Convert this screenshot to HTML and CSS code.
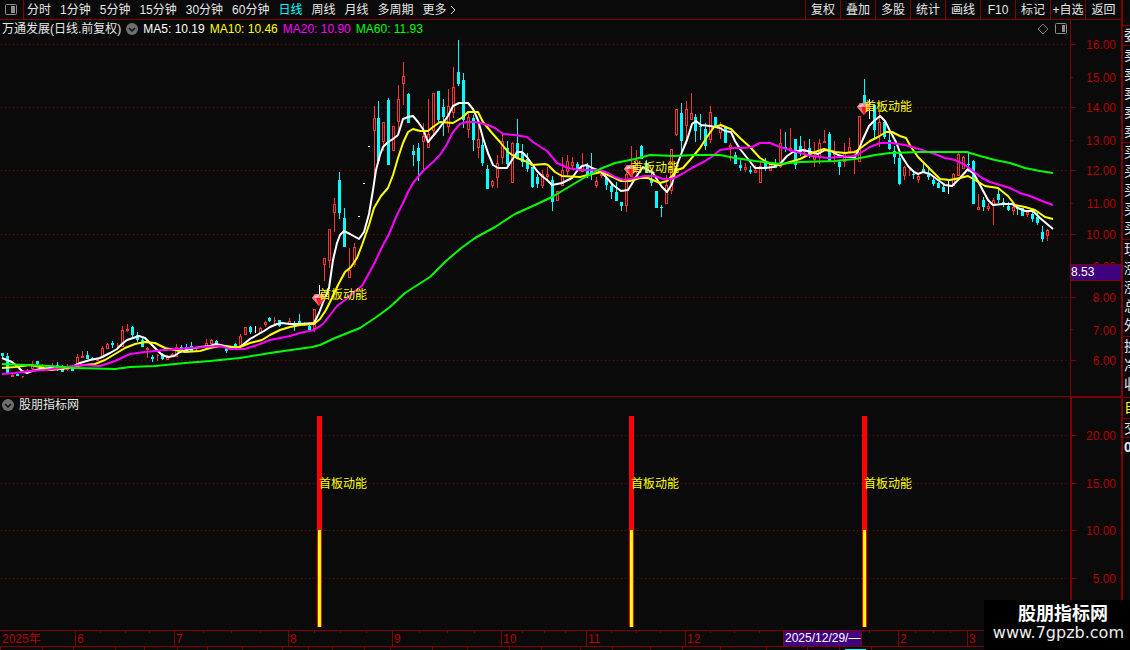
FILE: index.html
```html
<!DOCTYPE html>
<html lang="zh-CN">
<head>
    <meta charset="UTF-8">
    <meta name="viewport" content="width=device-width, initial-scale=1.0">
    <title>万通发展 日线</title>
    <link rel="stylesheet" href="styles.css">
</head>
<body>
    <div class="terminal">
        <div class="workspace">
            <!-- Toolbar -->
            <header class="toolbar">
                <button class="layout-btn" aria-label="布局">
                    <svg width="12" height="12" viewBox="0 0 12 12"><rect x="0.5" y="0.5" width="11" height="10" rx="1" fill="none" stroke="#8c8c8c"/><rect x="6" y="2" width="4" height="7" fill="#8c8c8c"/></svg>
                </button>
                <nav class="periods">
                    <button>分时</button>
                    <button>1分钟</button>
                    <button>5分钟</button>
                    <button>15分钟</button>
                    <button>30分钟</button>
                    <button>60分钟</button>
                    <button class="active">日线</button>
                    <button>周线</button>
                    <button>月线</button>
                    <button>多周期</button>
                    <button class="more">更多
                        <svg width="6" height="10" viewBox="0 0 6 10"><path d="M1 1l4 4-4 4" fill="none" stroke="#dcdcdc"/></svg>
                    </button>
                </nav>
                <div class="tools">
                    <button>复权</button>
                    <button>叠加</button>
                    <button>多股</button>
                    <button>统计</button>
                    <button>画线</button>
                    <button>F10</button>
                    <button>标记</button>
                    <button>+自选</button>
                    <button>返回</button>
                </div>
            </header>

            <!-- Price chart -->
            <section class="panel">
                <div class="panel-head">
                    <span>万通发展(日线.前复权)</span>
                    <button class="fold" aria-label="收起">
                        <svg width="12" height="12" viewBox="0 0 12 12"><circle cx="6" cy="6" r="6" fill="#6e6e6e"/><path d="M3 5l3 3 3-3" fill="none" stroke="#111" stroke-width="1.5"/></svg>
                    </button>
                    <span class="ma5">MA5: 10.19</span>
                    <span class="ma10">MA10: 10.46</span>
                    <span class="ma20">MA20: 10.90</span>
                    <span class="ma60">MA60: 11.93</span>
                    <span class="head-icons">
                        <svg width="12" height="12" viewBox="0 0 12 12"><path d="M6 1l5 5-5 5-5-5z" fill="none" stroke="#777"/></svg>
                        <svg width="12" height="12" viewBox="0 0 12 12"><rect x="0.5" y="0.5" width="11" height="10" rx="1" fill="none" stroke="#8c8c8c"/><rect x="7" y="2" width="3" height="7" fill="#8c8c8c"/></svg>
                    </span>
                </div>
                <svg id="price" class="chart" viewBox="0 20 1121 376"></svg>
            </section>

            <!-- Indicator -->
            <section class="panel">
                <div class="panel-head">
                    <button class="fold" aria-label="收起">
                        <svg width="12" height="12" viewBox="0 0 12 12"><circle cx="6" cy="6" r="6" fill="#6e6e6e"/><path d="M3 5l3 3 3-3" fill="none" stroke="#111" stroke-width="1.5"/></svg>
                    </button>
                    <span>股朋指标网</span>
                </div>
                <svg id="signal" class="chart" viewBox="0 396 1121 234"></svg>
            </section>

            <!-- Dates -->
            <svg id="dates" class="chart" viewBox="0 630 1121 20"></svg>
        </div>

        <!-- Quote sidebar, cut by the window edge -->
        <aside class="quotes">
            <p class="group top">委</p>
            <p class="group five">卖<br>卖<br>卖<br>卖<br>卖</p>
            <p class="group five">买<br>买<br>买<br>买<br>买</p>
            <p class="group five">现<br>涨<br>涨<br>总<br>外</p>
            <p class="group three">换<br>净<br>收</p>
            <p class="group self">自</p>
            <p class="group deal">交</p>
            <p class="group count">0</p>
        </aside>
    </div>

    <div class="watermark">
        <strong>股朋指标网</strong>
        <span>www.7gpzb.com</span>
    </div>

    <script src="chart.js"></script>
</body>
</html>
```
FILE: styles.css
```css
* {
    margin: 0;
    padding: 0;
    box-sizing: border-box;
}

body {
    background: #0a0a0a;
    color: #e6e6e6;
    font-family: "Liberation Sans", "Noto Sans CJK SC", sans-serif;
    font-size: 12px;
    line-height: 18px;
    overflow: hidden;
}

button {
    background: none;
    border: none;
    color: inherit;
    font: inherit;
    white-space: nowrap;
    cursor: pointer;
}

svg {
    display: block;
}

.terminal {
    display: flex;
    position: relative;
}

.workspace {
    flex: 1;
    min-width: 0;
}

/* Toolbar */
.toolbar {
    display: flex;
    height: 20px;
    border-bottom: 1px solid #800000;
}

.layout-btn {
    width: 24px;
    padding-left: 5px;
    border-right: 1px solid #800000;
}

.periods {
    display: flex;
    gap: 9px;
    padding-left: 3px;
}

.periods .active {
    color: #00ffff;
}

.more {
    display: flex;
    align-items: center;
    gap: 3px;
}

.tools {
    display: flex;
    margin-left: auto;
}

.tools button {
    width: 35px;
    border-left: 1px solid #800000;
}

.tools button:last-child {
    width: 36px;
}

/* Chart panels */
.panel {
    position: relative;
}

.panel-head {
    position: absolute;
    top: 0;
    left: 0;
    right: 51px;
    display: flex;
    align-items: center;
    gap: 5px;
    padding-left: 2px;
    white-space: nowrap;
}

.fold {
    width: 12px;
    height: 12px;
}

.ma5 { color: #fff; }
.ma10 { color: #ff0; }
.ma20 { color: #f0f; }
.ma60 { color: #0f0; }

.head-icons {
    display: flex;
    gap: 6px;
    margin-left: auto;
    padding-right: 3px;
}

.chart {
    width: 100%;
    height: auto;
}

.frame {
    fill: none;
    stroke: #800000;
    shape-rendering: crispEdges;
}

.thick {
    stroke-width: 2;
}

.grid-line {
    stroke: #780000;
    stroke-dasharray: 1 3;
    shape-rendering: crispEdges;
}

.axis-text {
    fill: #b40000;
    font-size: 12px;
}

.end {
    text-anchor: end;
}

.cursor-box {
    fill: #400080;
    stroke: #800000;
    shape-rendering: crispEdges;
}

.cursor-text {
    fill: #fff;
    font-size: 12px;
}

.up {
    fill: #0a0a0a;
    stroke: #ff3232;
    shape-rendering: crispEdges;
}

.down {
    fill: #00ffff;
    shape-rendering: crispEdges;
}

.flat {
    fill: #fff;
    shape-rendering: crispEdges;
}

.line {
    fill: none;
    stroke-width: 2;
    stroke-linejoin: round;
}

.line.ma5 { stroke: #fff; }
.line.ma10 { stroke: #ff0; }
.line.ma20 { stroke: #f0f; }
.line.ma60 { stroke: #0f0; }

.bar-red { fill: #f00; }
.bar-yellow { fill: #ff0; }

.signal-text {
    fill: #ff0;
    font-size: 12px;
}

/* Sidebar */
.quotes {
    width: 9px;
    height: 650px;
    padding-top: 25px;
    overflow: hidden;
    border-left: 2px solid #800000;
}

.group {
    width: 20px;
    padding-left: 1px;
    font-size: 14px;
    line-height: 19px;
    border-top: 1px solid #800000;
}

.top { height: 20px; }
.five { height: 97px; }
.three { height: 61px; }

.self {
    height: 21px;
    color: #ff0;
}

.deal { height: 19px; }

.count {
    font-weight: bold;
}

/* Watermark */
.watermark {
    position: absolute;
    right: 0;
    top: 600px;
    display: flex;
    flex-direction: column;
    align-items: flex-end;
    width: 146px;
    height: 50px;
    padding: 5px 6px 0 0;
    background: #000;
    color: #fff;
}

.watermark strong {
    padding-right: 16px;
    font-size: 18px;
    line-height: 19px;
}

.watermark span {
    font-family: "DejaVu Sans", sans-serif;
    font-size: 16px;
    line-height: 18px;
    color: #eee;
}
```
FILE: chart.js
```javascript
// candles: x, high, body top, body bottom, low
const up = [
    [12,374,375,377,377],[22,376,376,377,378],[27,369,370,373,373],[32,361,364,369,370],[42,364,366,368,370],[52,363,368,371,371],
    [67,364,366,370,371],[77,354,357,369,369],[82,351,356,358,358],[97,358,359,361,361],[102,346,348,358,358],[107,343,344,349,349],
    [117,343,345,346,348],[122,326,330,347,347],[127,324,329,331,332],[147,347,348,350,358],[157,354,355,356,361],[167,355,356,360,360],
    [172,353,354,356,356],[176,344,347,357,357],[196,347,350,352,352],[206,339,343,348,348],[211,339,340,344,344],[240,334,336,346,346],
    [245,327,327,335,335],[260,327,328,333,333],[265,321,322,325,327],[274,317,320,321,324],[289,318,321,324,324],[304,322,324,325,326],
    [314,309,309,329,332],[324,258,258,265,281],[329,229,229,261,268],[334,198,204,213,232],[349,248,270,278,278],[354,243,247,265,267],
    [374,106,118,131,176],[383,122,122,142,151],[393,126,126,151,151],[398,85,99,122,131],[403,62,76,84,105],[423,123,136,142,169],
    [428,99,134,148,148],[433,93,93,131,136],[448,89,106,127,133],[453,67,87,113,118],[468,112,117,130,138],[478,120,139,148,158],
    [492,180,181,186,188],[497,155,163,178,188],[502,132,141,158,164],[512,142,143,183,183],[542,170,174,186,188],[547,167,174,177,181],
    [557,191,191,201,201],[562,157,170,186,186],[567,155,161,172,175],[572,157,162,166,169],[582,153,165,172,172],[596,177,181,186,188],
    [601,170,174,176,178],[626,170,174,206,212],[631,146,165,177,177],[636,150,160,170,174],[666,175,185,204,204],[671,149,149,191,194],
    [676,109,109,135,136],[686,101,109,126,144],[691,93,113,120,120],[710,106,112,140,143],[720,122,125,133,139],[730,143,145,148,161],
    [745,163,167,170,172],[755,165,170,173,173],[760,162,166,183,183],[770,162,163,171,171],[780,129,143,167,168],[790,128,148,150,152],
    [804,141,149,152,158],[814,142,155,160,167],[819,139,143,158,164],[824,130,141,143,143],[834,141,152,155,164],[844,143,153,162,167],
    [849,138,147,152,152],[854,150,155,160,174],[859,116,116,162,162],[879,110,122,136,147],[904,166,167,176,180],[909,167,170,171,176],
    [918,175,176,180,183],[953,173,174,186,186],[958,152,154,176,176],[963,156,157,169,169],[978,194,207,210,210],[988,203,206,209,211],
    [993,198,200,205,225],[1013,205,207,211,215],[1027,211,212,215,217],[1047,229,230,236,241]
];

const down = [
    [2,353,353,356,357],[7,353,356,373,374],[17,373,374,376,376],[37,361,361,364,366],[57,362,365,370,371],[62,365,366,372,372],
    [72,366,367,371,371],[87,351,355,359,359],[92,357,358,360,360],[112,341,343,345,348],[132,326,327,335,337],[137,332,335,340,342],
    [142,338,340,347,347],[152,355,357,359,362],[162,353,354,359,360],[181,345,347,350,350],[186,344,347,351,351],[191,342,346,351,351],
    [216,340,341,345,345],[226,348,348,351,353],[235,343,344,347,347],[250,326,327,332,334],[269,317,318,321,322],[279,320,320,326,327],
    [294,321,324,326,331],[299,314,321,323,324],[309,325,326,330,331],[339,172,180,213,219],[344,208,218,247,247],[378,101,118,161,161],
    [388,98,100,165,165],[408,93,94,123,123],[413,145,151,155,166],[418,143,148,161,181],[438,91,91,120,123],[443,99,107,117,136],
    [458,40,72,84,86],[463,73,80,120,128],[473,115,118,140,151],[482,138,145,163,166],[487,165,169,189,189],[507,141,148,164,166],
    [517,119,143,158,158],[522,144,152,162,167],[527,153,159,169,172],[532,167,167,187,188],[537,174,177,184,188],[552,176,180,202,211],
    [577,162,164,170,172],[587,163,165,175,178],[591,153,170,174,180],[606,177,178,185,190],[611,182,186,192,199],[616,182,192,201,201],
    [621,202,202,206,211],[641,145,146,159,159],[646,160,163,173,173],[651,173,179,183,186],[656,191,191,208,208],[661,205,207,208,217],
    [681,103,113,141,153],[695,114,117,131,142],[700,114,126,127,140],[705,123,129,146,150],[715,117,117,127,127],[725,127,127,143,143],
    [735,152,155,164,164],[740,160,165,168,171],[750,166,170,172,174],[765,158,162,167,171],[775,159,163,168,168],[785,132,147,149,152],
    [795,139,139,165,169],[800,136,146,152,156],[809,139,148,156,158],[829,132,134,162,162],[839,160,162,167,175],[864,79,95,108,108],
    [874,104,105,130,139],[884,120,122,137,139],[889,133,140,149,150],[894,146,151,157,164],[899,153,158,184,185],[913,170,174,175,179],
    [923,162,169,172,173],[928,168,173,177,180],[933,178,180,184,186],[938,182,183,188,188],[943,185,187,192,192],[968,153,164,165,172],
    [973,160,161,204,204],[983,197,200,207,211],[998,188,194,200,203],[1003,198,202,204,207],[1008,202,206,210,211],[1017,206,208,209,215],
    [1022,208,208,216,216],[1032,212,214,219,222],[1037,213,217,223,225],[1042,226,232,239,242]
];

// unchanged days: x, top, bottom
const flat = [[255,326,333],[319,285,302],[869,99,119],[948,180,194]];
// one-price limit days
const limit = [[359,216],[364,183],[369,146]];

const averages = {
    ma5: '2,358 7,360 12,362 17,366 22,371 27,373 32,371 40,369 50,368 62,369 72,367 80,363 90,360 100,358 110,353 117,349 122,344 127,340 133,338 139,336 145,338 150,343 157,350 162,355 168,357 174,356 180,352 190,349 200,347 210,346 216,344 225,346 235,348 240,347 245,343 250,339 257,335 264,331 270,327 277,324 282,323 290,324 300,324 314,323 319,313 324,300 329,288 333,260 337,243 340,235 344,231 350,234 359,239 364,232 369,214 373,190 376,170 380,155 383,147 388,142 393,139 398,135 403,119 408,117 413,116 418,122 423,129 428,142 433,136 438,130 443,123 448,116 453,106 459,103 468,103 473,109 478,120 483,138 488,153 493,165 498,168 507,168 512,160 517,152 522,152 527,157 532,164 537,171 542,176 547,180 552,185 562,183 572,178 577,171 582,166 587,165 592,168 600,171 606,177 613,185 621,191 628,190 633,182 638,174 643,167 648,170 653,173 658,181 662,187 667,192 672,184 677,165 682,152 687,140 692,124 696,121 701,125 710,126 720,128 725,131 731,132 735,141 740,149 748,159 755,168 765,168 773,167 780,164 787,156 793,152 803,150 811,152 818,154 825,150 831,151 838,155 845,157 855,157 859,149 863,139 869,126 874,121 880,116 885,121 890,131 896,142 901,155 908,166 914,172 918,174 923,172 930,174 938,180 945,185 952,186 959,179 968,169 974,174 980,185 988,200 993,205 1003,204 1012,204 1018,208 1025,211 1033,211 1040,218 1053,229',
    ma10: '2,368 15,367 30,365 40,367 50,370 60,369 75,366 85,365 95,364 105,360 115,354 125,348 135,344 145,342 155,343 165,348 175,350 185,352 200,351 210,348 220,346 235,347 240,347 250,343 262,340 270,335 280,330 290,327 300,325 314,324 320,319 326,310 332,298 338,285 345,272 351,267 357,258 362,245 369,225 374,208 381,196 388,188 393,175 398,158 403,143 408,132 413,129 420,131 428,131 433,127 440,122 453,123 463,117 468,112 478,112 483,122 492,133 500,142 508,152 517,158 525,161 532,165 545,164 548,165 555,172 562,176 580,177 592,174 602,172 608,175 615,178 621,181 630,181 640,178 648,178 660,183 667,181 672,176 677,170 683,168 690,160 700,148 707,137 714,127 721,125 728,128 731,129 740,138 750,147 760,158 770,164 780,165 790,162 800,159 810,154 818,151 824,149 835,152 845,153 855,152 862,147 870,141 878,137 886,132 892,132 900,136 906,138 911,147 918,157 928,167 940,179 950,180 960,178 968,176 975,180 985,186 998,188 1008,196 1015,205 1025,207 1035,210 1045,217 1053,219',
    ma20: '2,374 15,373 30,371 45,370 60,368 80,365 100,366 115,361 130,354 145,352 165,350 190,348 205,347 220,346 230,349 245,349 260,344 270,340 290,336 300,333 314,330 323,324 330,315 337,306 345,300 355,291 362,286 368,275 375,262 382,247 389,234 396,217 403,203 408,192 413,183 423,171 433,162 440,155 447,144 453,132 460,124 466,122 475,122 485,124 495,128 503,134 515,135 527,137 533,142 547,151 557,163 568,168 580,170 600,170 608,173 615,177 624,180 635,178 645,176 655,176 663,179 672,179 682,174 692,168 705,161 713,156 720,150 733,148 743,148 752,147 760,143 770,143 780,147 790,150 800,153 812,156 828,158 840,157 855,156 862,152 870,147 880,143 892,143 905,145 912,147 922,150 935,154 945,158 955,160 965,165 973,171 982,178 990,182 1000,185 1010,188 1020,193 1030,196 1042,201 1053,205',
    ma60: '2,364 50,366 75,368 115,369 130,367 155,366 185,363 210,361 240,358 270,353 312,347 320,345 335,338 360,328 375,318 390,307 405,293 430,277 445,262 460,249 475,238 495,227 515,214 535,205 552,197 567,188 582,179 600,169 615,163 635,159 650,155 675,156 695,155 720,155 735,158 755,161 780,164 800,162 835,161 855,159 875,155 890,153 920,152 967,152 980,156 995,160 1010,163 1025,168 1040,171 1053,173'
};

// x, gem top, label baseline
const signals = [[319, 299, 299], [631, 170, 172], [864, 108, 111]];

function rect(x, y, w, h, cls) {
    return `<rect class="${cls}" x="${x}" y="${y}" width="${w}" height="${h}"/>`;
}

function path(d, cls) {
    return `<path class="${cls}" d="${d}"/>`;
}

function text(x, y, value, cls) {
    return `<text class="${cls}" x="${x}" y="${y}">${value}</text>`;
}

function gem(x, y) {
    return `<g transform="translate(${x - 7} ${y - 5})">
        <path d="M3 0h8l3 4-7 8-7-8z" fill="#ff3c46"/>
        <path d="M3 0h8l3 4H0z" fill="#e89090"/>
        <path d="M4 4h6l-3 8z" fill="#ff1428"/>
        <path d="M0 4l4 0 3 8zM3 0l3 0-2 4z" fill="#f07078"/>
        <path d="M2 3l3-2 2 1-3 2z" fill="#fff" opacity="0.6"/>
    </g>`;
}

function drawPrice() {
    let out = '';
    [44, 107, 170, 234, 297, 360].forEach(y => {
        out += path(`M1 ${y + 0.5}H1067`, 'grid-line');
        out += path(`M1071 ${y + 0.5}h5`, 'frame');
    });
    [77, 140, 203, 266, 329].forEach(y => {
        out += path(`M1071 ${y + 0.5}h2`, 'frame');
    });
    [44, 77, 107, 140, 170, 203, 234, 266, 297, 330, 360].forEach((y, i) => {
        out += text(1116, y + 5, (16 - i).toFixed(2), 'axis-text end');
    });
    out += path('M1070.5 20V396', 'frame');
    out += rect(1070.5, 264.5, 51, 16, 'cursor-box') + text(1071, 276, '8.53', 'cursor-text');

    up.forEach(([x, h, t, b, l]) => {
        out += path(`M${x + 0.5} ${h}V${t}M${x + 0.5} ${b}V${l}`, 'up');
        out += path(`M${x - 0.5} ${t + 0.5}h2V${b - 0.5}h-2z`, 'up');
    });
    down.forEach(([x, h, t, b, l]) => {
        out += rect(x, h, 1, l - h, 'down') + rect(x - 1, t, 3, b - t, 'down');
    });
    flat.forEach(([x, t, b]) => { out += rect(x, t, 1, b - t, 'flat'); });
    limit.forEach(([x, y]) => { out += rect(x - 1, y, 2, 1, 'flat'); });

    for (const name in averages) {
        out += `<polyline class="line ${name}" points="${averages[name]}"/>`;
    }
    signals.forEach(([x, gemY, textY]) => {
        out += gem(x, gemY) + text(x, textY, '首板动能', 'signal-text');
    });
    document.getElementById('price').innerHTML = out;
}

function drawSignal() {
    let out = path('M0 396.5H1121', 'frame');
    [435, 483, 530, 578].forEach((y, i) => {
        out += path(`M1 ${y + 0.5}H1067`, 'grid-line');
        out += path(`M1072 ${y + 0.5}h5`, 'frame');
        out += text(1116, y + 5, (20 - i * 5).toFixed(2), 'axis-text end');
    });
    out += path('M1071 630V397H1121', 'frame thick');
    signals.forEach(([x]) => {
        out += rect(x - 2, 416, 5, 211, 'bar-red');
        out += rect(x - 1, 530, 3, 97, 'bar-yellow');
        out += text(x, 488, '首板动能', 'signal-text');
    });
    document.getElementById('signal').innerHTML = out;
}

function drawDates() {
    let out = path('M0 630.5H1121M0 646.5H1121', 'frame');
    const months = [[75, '6'], [174, '7'], [288, '8'], [392, '9'], [501, '10'], [586, '11'], [685, '12'], [783, ''], [898, '2'], [967, '3']];
    out += text(2, 643, '2025年', 'axis-text');
    months.forEach(([x, label], i) => {
        out += path(`M${x + 0.5} 631V646`, 'frame') + text(x + 2, 643, label, 'axis-text');
        const next = i + 1 < months.length ? months[i + 1][0] : x + 100;
        for (let n = 1; n < 4; n++) {
            out += path(`M${Math.round(x + (next - x) * n / 4) + 0.5} 631v2`, 'frame');
        }
    });
    out += rect(783.5, 630.5, 78, 16, 'cursor-box') + text(785, 642, '2025/12/29/—', 'cursor-text');
    [0, 42, 73, 115, 144, 177, 207, 242, 282, 308, 332, 364, 390, 432, 467, 509, 541, 580, 612, 650, 682, 720, 766, 807, 839, 871].forEach(x => {
        out += path(`M${x + 0.5} 647v3`, 'frame');
    });
    out += rect(845, 649, 21, 1, 'down');
    document.getElementById('dates').innerHTML = out;
}

drawPrice();
drawSignal();
drawDates();
```
